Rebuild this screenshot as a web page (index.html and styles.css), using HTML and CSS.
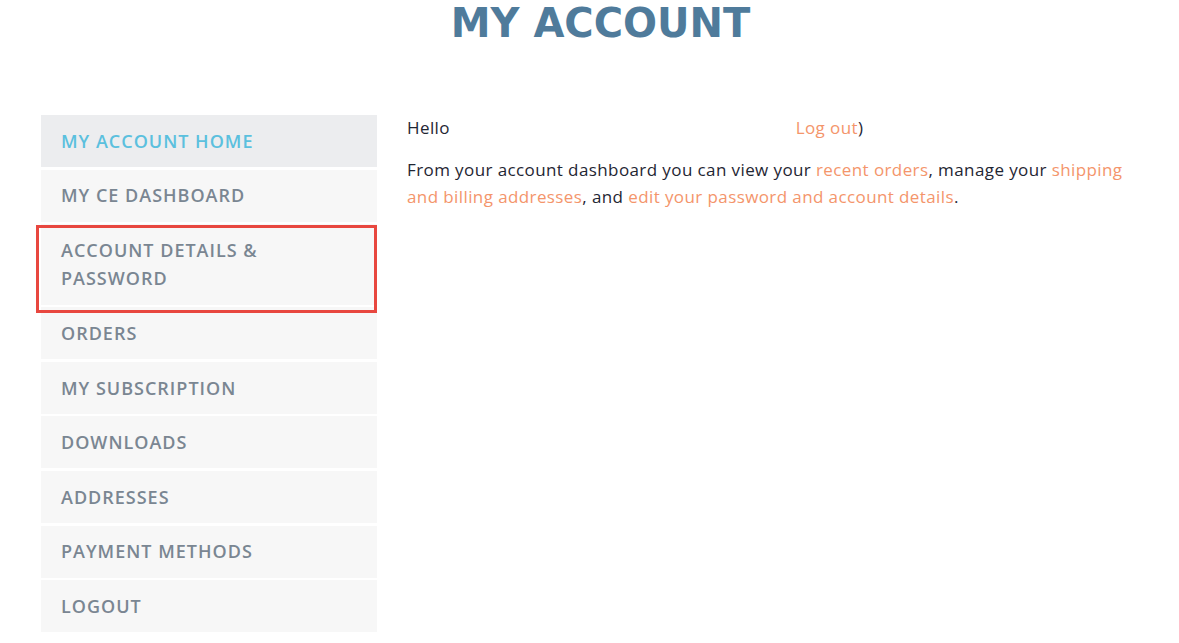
FILE: index.html
```html
<!DOCTYPE html>
<html lang="en">
<head>
<meta charset="utf-8">
<title>My Account</title>
<link rel="stylesheet" href="styles.css">
</head>
<body>
<div class="page">
  <h1 class="title">MY ACCOUNT</h1>
  <div class="account">
    <nav class="nav">
      <a class="nav-item active" href="#">My Account Home</a>
      <a class="nav-item" href="#">My CE Dashboard</a>
      <a class="nav-item highlighted" href="#">Account Details &amp; Password</a>
      <a class="nav-item" href="#">Orders</a>
      <a class="nav-item" href="#">My Subscription</a>
      <a class="nav-item" href="#">Downloads</a>
      <a class="nav-item" href="#">Addresses</a>
      <a class="nav-item" href="#">Payment Methods</a>
      <a class="nav-item" href="#">Logout</a>
    </nav>
    <div class="content">
      <p class="hello">Hello <span class="redacted"></span><a href="#">Log out</a>)</p>
      <p>From your account dashboard you can view your <a href="#">recent orders</a>, manage your <a href="#">shipping and billing addresses</a>, and <a href="#">edit your password and account details</a>.</p>
    </div>
  </div>
</div>
</body>
</html>
```

FILE: styles.css
```css
html, body {
  margin: 0;
  padding: 0;
  background: #ffffff;
}

body {
  font-family: "Open Sans", "Liberation Sans", sans-serif;
  color: #1f2633;
}

.page {
  padding: 0 19px 0 41px;
}

.title {
  margin: 0;
  height: 115px;
  text-align: center;
  font-family: "DejaVu Sans", "Open Sans", sans-serif;
  font-weight: 700;
  font-size: 40px;
  line-height: 47px;
  color: #4f7b9b;
}

.account {
  display: flex;
  gap: 30px;
}

.nav {
  width: 336px;
  flex: none;
  display: flex;
  flex-direction: column;
  gap: 2.6px;
}

.nav-item {
  position: relative;
  display: block;
  background: #f7f7f7;
  padding: 11.7px 20px;
  font-size: 18px;
  line-height: 28.6px;
  font-weight: 600;
  letter-spacing: 1px;
  text-transform: uppercase;
  color: #7a8692;
  text-decoration: none;
}

.nav-item.active {
  background: #ecedef;
  color: #5bc0de;
}

.nav-item.highlighted {
  z-index: 1;
}

.nav-item.highlighted::after {
  content: "";
  position: absolute;
  left: -5px;
  right: 0;
  top: 1px;
  bottom: -8px;
  border: 3px solid #e8473f;
}

.content {
  flex: 1;
  margin-top: -1px;
  padding-right: 25px;
  font-size: 17px;
  line-height: 27px;
  letter-spacing: 0.4px;
}

.content p {
  margin: 0 0 15px;
}

.content a {
  color: #f4956b;
  text-decoration: none;
}

.redacted {
  display: inline-block;
  width: 341px;
}
```
